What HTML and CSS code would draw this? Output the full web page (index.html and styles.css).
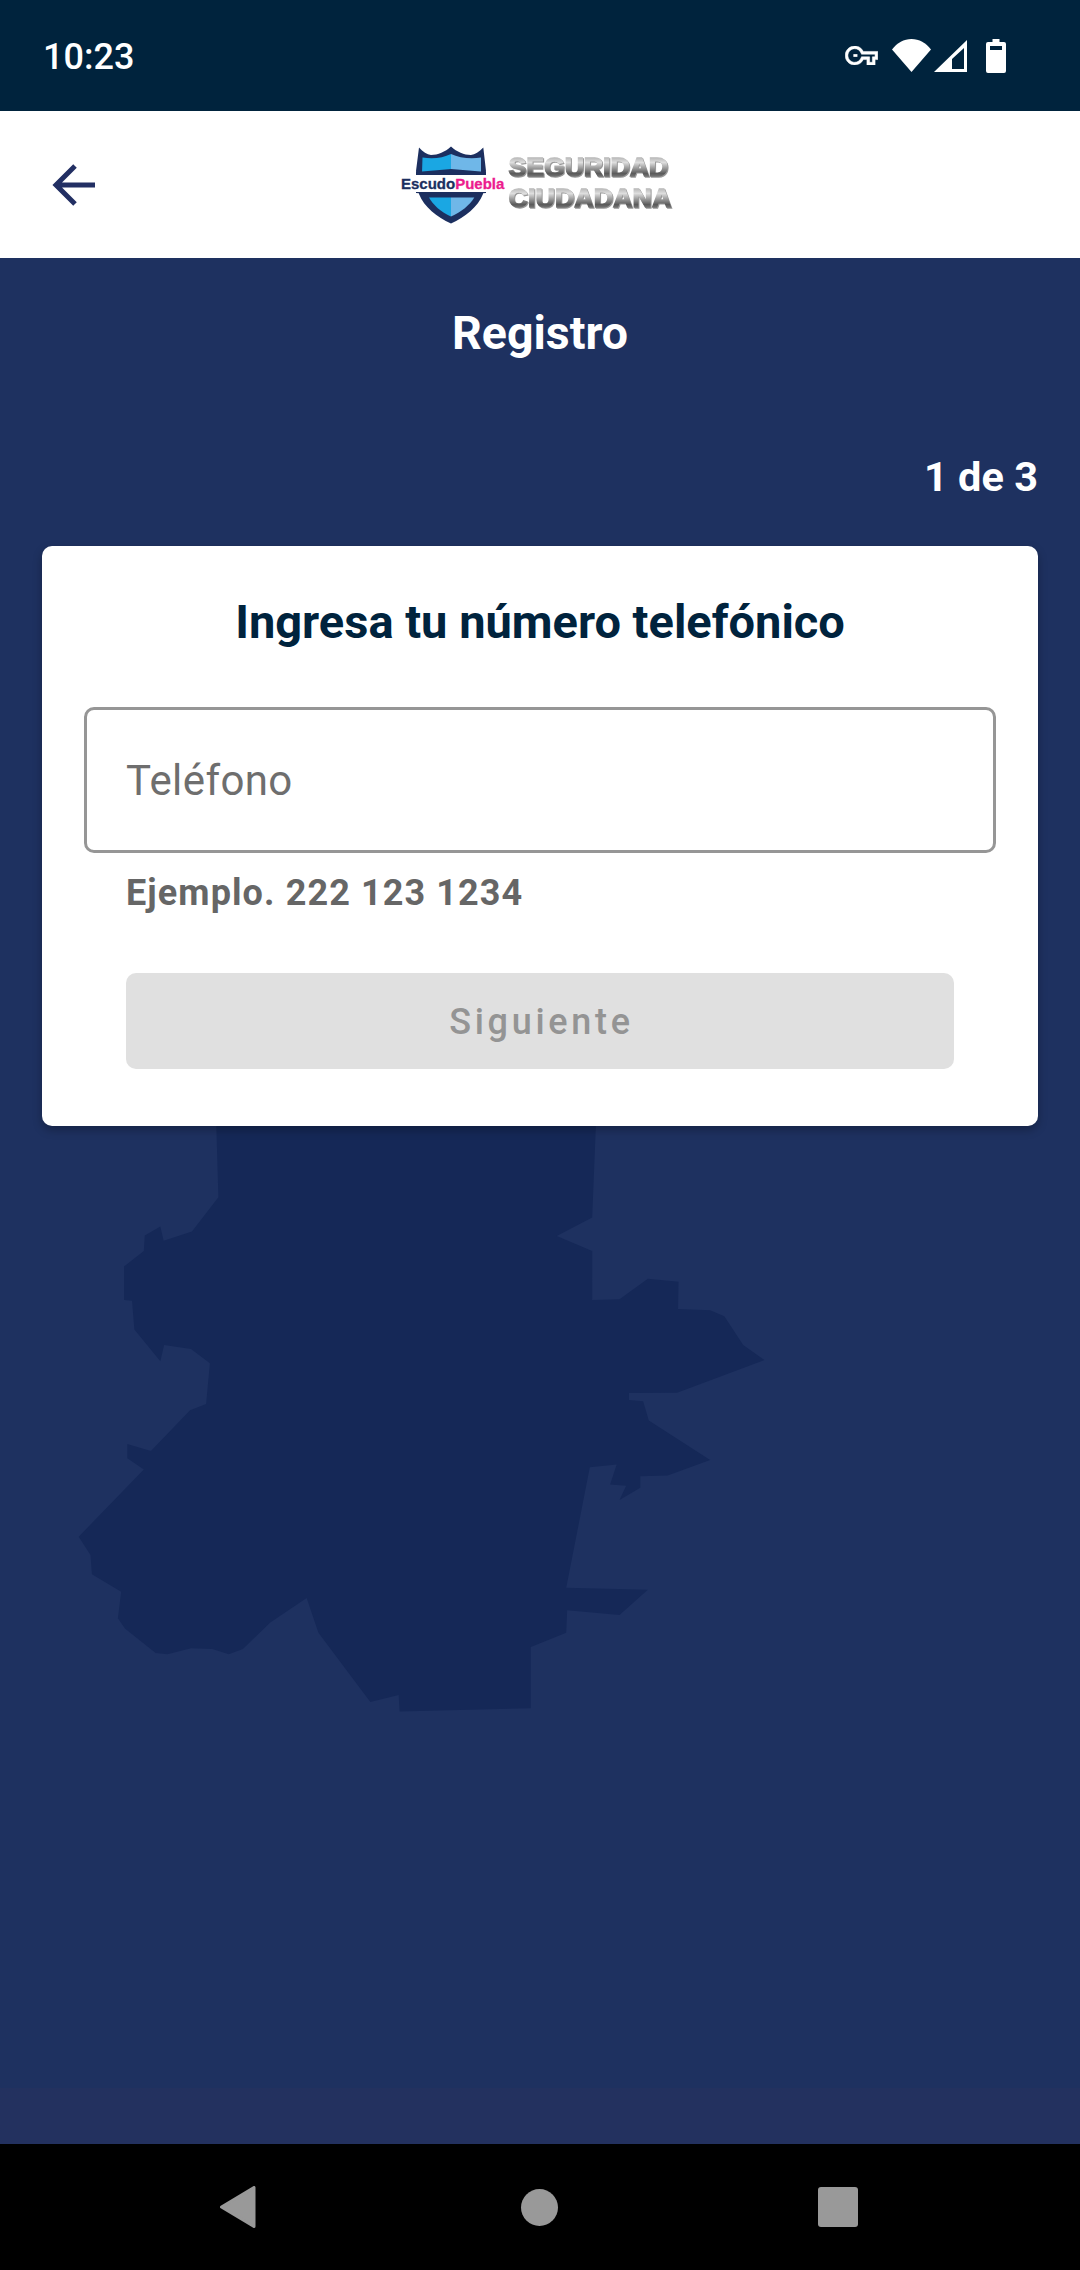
FILE: index.html
```html
<!DOCTYPE html>
<html lang="es">
<head>
<meta charset="utf-8">
<title>Registro</title>
<link rel="stylesheet" href="styles.css">
</head>
<body>
<div class="screen">
  <div class="statusbar">
    <span class="time">10:23</span>
    <div class="status-icons">
      <svg class="ic-key" viewBox="0 5 24 14"><path fill-rule="evenodd" d="M22 19h-6v-4h-2.680c-1.140 2.420-3.600 4-6.320 4-3.860 0-7-3.140-7-7s3.140-7 7-7c2.720 0 5.170 1.580 6.320 4H24v6h-2v4zm-4-2h2v-4h2v-2H11.940l-.23-.67C11.010 8.340 9.110 7 7 7c-2.760 0-5 2.240-5 5s2.240 5 5 5c2.110 0 4.010-1.340 4.710-3.330l.23-.67H18v4z" fill="#fff" stroke="#fff" stroke-width=".4"/><rect x="6" y="11" width="3" height="2" fill="#fff"/></svg>
      <svg class="ic-wifi" viewBox="0 0 39 33"><path d="M0 10.500C5 4 12 0 19.500 0S34 4 39 10.500L19.500 33z" fill="#fff"/></svg>
      <svg class="ic-signal" viewBox="0 0 33 32"><path fill-rule="evenodd" d="M33 0v32H0zM30 8 18 19v10h12z" fill="#fff"/></svg>
      <svg class="ic-battery" viewBox="0 0 20 34"><path fill-rule="evenodd" d="M6.500 0h7v3H18a2 2 0 0 1 2 2v27a2 2 0 0 1-2 2H2a2 2 0 0 1-2-2V5a2 2 0 0 1 2-2h4.500zM4 7v4h12V7z" fill="#fff"/></svg>
    </div>
  </div>
  <header class="appbar">
    <svg class="ic-back" viewBox="0 0 46 44"><path d="M44 22H5M24 3 5 22l19 19" fill="none" stroke="#222f63" stroke-width="5"/></svg>
    <svg class="logo" viewBox="0 0 280 80">
      <defs>
        <linearGradient id="metal" x1="0" y1="0" x2="0" y2="1">
          <stop offset="0" stop-color="#8e8e8e"/>
          <stop offset="0.35" stop-color="#dedede"/>
          <stop offset="0.72" stop-color="#5a5a5a"/>
          <stop offset="1" stop-color="#a8a8a8"/>
        </linearGradient>
      </defs>
      <path d="M19 2.500C23 7 27 9.500 31 10 38 10 45 7 51 1.500 57 7 64 10 71 10c4-.5 8-3 12.300-7.500L86 26l-3 23c-5 13-18 23-32 29.500C37 72 24 62 19 49L16 26z" fill="#1c2f5f"/>
      <path d="M22.500 12.500C33 14 43 13 51 9v19H22z" fill="#1aa7e3"/>
      <path d="M51 9c8 4 20 5 30 3.500L81 28H51z" fill="#6fb7e8"/>
      <path d="M29 52.500h22v19C41 67 33 60 29 52.500z" fill="#1aa7e3"/>
      <path d="M51 52.500h23.300C70 60 61 67 51 71.500z" fill="#6fb7e8"/>
      <path d="M16 27c12-1 24-2 35-3 12 1 24 2 35 3v3H16z" fill="#1c2f5f"/>
      <path d="M16 47h70v1c-12 1-24 2-35 4-12-2-24-3-35-4z" fill="#1c2f5f"/>
      <rect x="0" y="30" width="105" height="17" fill="#fff"/>
      <text class="logo-a" x="1" y="44">Escudo<tspan class="logo-b">Puebla</tspan></text>
      <text class="logo-c" x="108.500" y="31">SEGURIDAD</text>
      <text class="logo-c logo-d" x="108.500" y="62">CIUDADANA</text>
    </svg>
  </header>
  <main class="content">
    <svg class="map" viewBox="0 0 1568 1568" preserveAspectRatio="none"><polygon fill="#152857" points="372,0 378,238 322,322 262,345 255,310 222,332 220,370 178,408 178,490 195,492 200,562 255,640 263,600 320,610 360,645 352,745 318,760 235,860 185,843 185,878 220,905 82,1070 107,1115 110,1162 172,1205 165,1270 180,1295 245,1355 270,1358 320,1343 365,1345 400,1358 430,1345 488,1280 565,1220 590,1305 700,1475 760,1458 762,1498 1040,1490 1040,1340 1115,1305 1117,1250 1228,1262 1288,1200 1115,1195 1165,900 1222,893 1208,942 1242,945 1228,980 1272,950 1272,922 1330,920 1420,882 1290,785 1278,738 1248,735 1248,718 1350,717 1535,637 1490,600 1450,530 1420,515 1352,512 1353,445 1288,438 1228,488 1170,490 1170,370 1095,333 1170,288 1180,0"/></svg>
    <h1 class="title">Registro</h1>
    <p class="step">1 de 3</p>
    <section class="card">
      <h2 class="card-title">Ingresa tu número telefónico</h2>
      <div class="field"><span class="placeholder">Teléfono</span></div>
      <p class="hint">Ejemplo. 222 123 1234</p>
      <div class="button">Siguiente</div>
    </section>
    <div class="spacer"></div>
    <div class="band"></div>
  </main>
  <nav class="navbar">
    <svg class="nav-back" viewBox="0 0 36 42"><path d="M34 1.500v39L1.500 21z" fill="#999" stroke="#999" stroke-width="3" stroke-linejoin="round"/></svg>
    <span class="nav-home"></span>
    <span class="nav-recent"></span>
  </nav>
</div>
</body>
</html>
```

FILE: styles.css
```css
* { box-sizing: border-box; }
html, body { margin: 0; padding: 0; }
body { font-family: Roboto, "Liberation Sans", sans-serif; background: #1e3160; }
.screen { width: 1080px; height: 2270px; display: flex; flex-direction: column; overflow: hidden; }

.statusbar { height: 111px; flex: none; background: #00233d; display: flex; align-items: center; justify-content: space-between; padding: 0 74px 0 43px; }
.time { color: #fff; font-size: 36px; font-weight: 500; line-height: 1; padding-top: 2px; }
.status-icons { display: flex; align-items: center; gap: 3px; }
.status-icons svg { display: block; }
.ic-key { width: 33px; height: 19px; margin-right: 11px; }
.ic-wifi { width: 39px; height: 33px; }
.ic-signal { width: 33px; height: 32px; margin-right: 16px; }
.ic-battery { width: 20px; height: 34px; }

.appbar { height: 147px; flex: none; background: #fff; display: flex; align-items: center; padding-left: 51px; position: relative; }
.ic-back { width: 46px; height: 44px; display: block; }
.logo { width: 280px; height: 80px; display: block; margin-left: 303px; }
.logo-a { font: 700 15px "Liberation Sans", Arial, sans-serif; fill: #1c2f5f; stroke: #1c2f5f; stroke-width: .3px; }
.logo-b { fill: #ec1c8e; stroke: #ec1c8e; }
.logo-c { font: 700 26.600px "Liberation Sans", Arial, sans-serif; fill: url(#metal); stroke: url(#metal); stroke-width: 1.400px; filter: drop-shadow(1px 1px 0 rgba(70,70,70,.55)); }
.logo-d { letter-spacing: .2px; }

.content { flex: 1; background: #1e3160; position: relative; display: flex; flex-direction: column; }
.map { position: absolute; left: 40px; top: 842px; width: 740px; height: 640px; display: block; }
.title { position: relative; margin: 52px 0 0; color: #fff; font-size: 46.500px; line-height: 47px; font-weight: 700; text-align: center; }
.step { position: relative; margin: 98px 42px 0 0; color: #fff; font-size: 41.500px; line-height: 44px; font-weight: 700; text-align: right; }
.card { position: relative; margin: 47px 42px 0; height: 580px; background: #fff; border-radius: 10px; box-shadow: 0 4px 10px rgba(0,0,0,.28); padding: 51px 42px 0; }
.card-title { margin: 0; color: #00233d; font-size: 47px; line-height: 50px; font-weight: 700; text-align: center; }
.field { margin-top: 60px; height: 146px; border: 3px solid #969696; border-radius: 10px; display: flex; align-items: center; padding: 1px 0 0 39px; }
.placeholder { color: #6e6e6e; font-size: 42px; font-weight: 400; letter-spacing: .4px; }
.hint { margin: 18px 0 0 42px; color: #666; font-size: 36px; line-height: 44px; font-weight: 700; letter-spacing: 1.100px; }
.button { margin: 58px 42px 0; height: 96px; background: #e0e0e0; border-radius: 10px; display: flex; align-items: center; justify-content: center; padding: 2px 0 0 3px; color: #949494; font-size: 36px; font-weight: 500; letter-spacing: 3.700px; }
.spacer { flex: 1; }
.band { position: relative; height: 56px; flex: none; background: #23315f; }

.navbar { height: 126px; flex: none; background: #000; position: relative; display: flex; align-items: center; }
.nav-back { width: 36px; height: 42px; margin-left: 220px; display: block; }
.nav-home { width: 37px; height: 37px; border-radius: 50%; background: #999; margin-left: 265px; }
.nav-recent { width: 40px; height: 40px; border-radius: 3px; background: #999; margin-left: 260px; }
```
